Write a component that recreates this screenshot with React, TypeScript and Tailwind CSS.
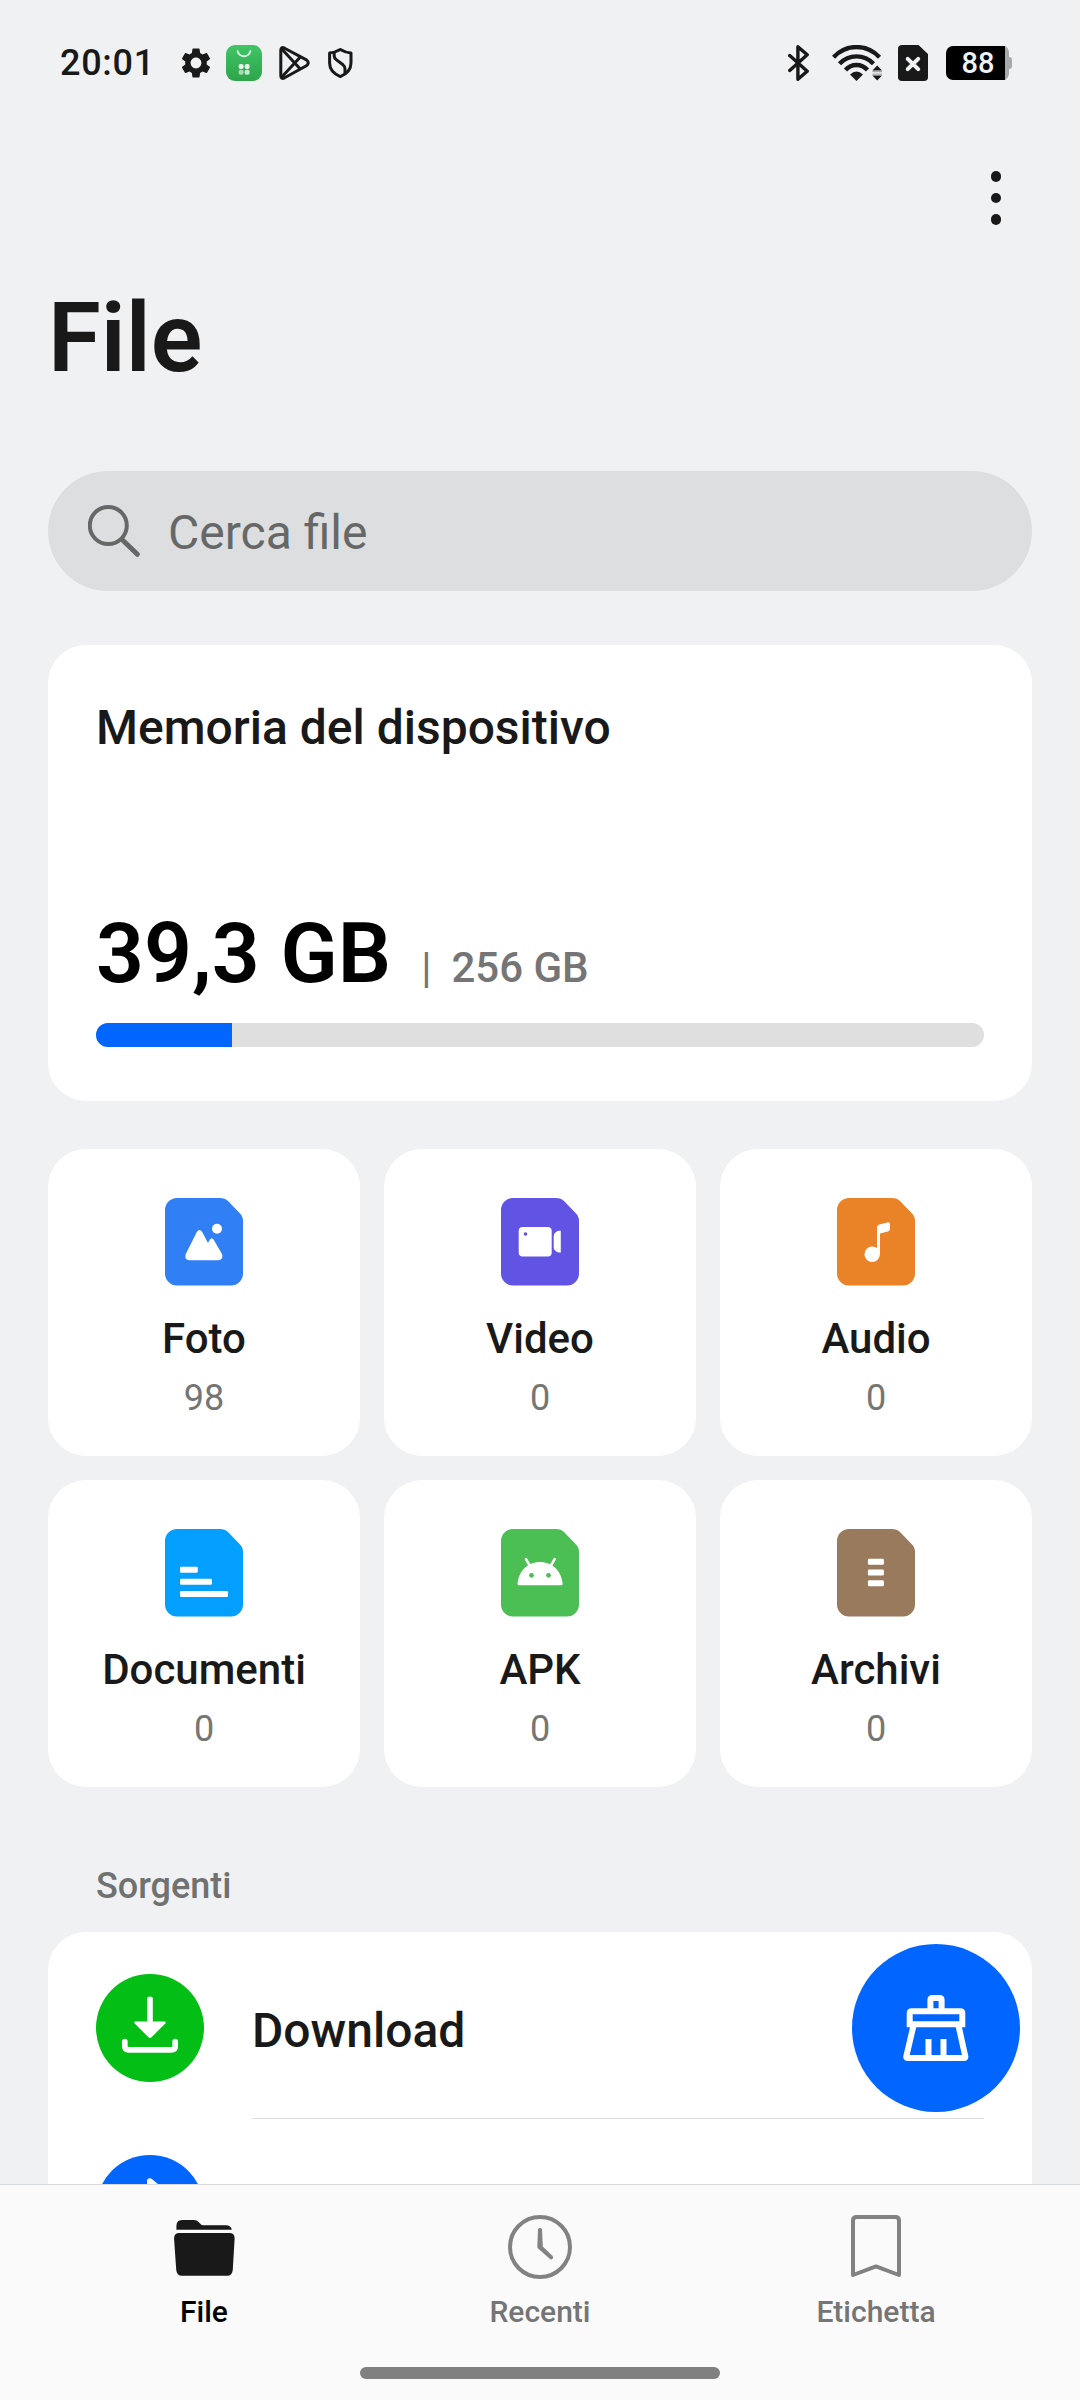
import type { ReactNode } from 'react';
import { MdSettings } from 'react-icons/md';

type Category = {
  label: string;
  count: number;
  color: string;
  glyph: ReactNode;
};

const CATEGORIES: Category[] = [
  {
    label: 'Foto',
    count: 98,
    color: 'text-[#317ff5]',
    glyph: (
      <>
        <circle cx="52" cy="30.7" r="5" />
        <path d="M31.8 34Q34.5 30 37.2 34L43 45L44.7 41.8Q46.8 38.8 48.7 41.8L57 56Q58.8 61.5 53.5 62.2H24Q18.8 61.5 20.8 56Z" />
      </>
    ),
  },
  {
    label: 'Video',
    count: 0,
    color: 'text-[#6153e3]',
    glyph: (
      <>
        <rect x="17.7" y="29" width="33" height="29.4" rx="4" />
        <circle cx="24.5" cy="36" r="1.8" fill="#6153e3" />
        <path d="M59.8 32.7H57.6Q56.3 32.7 54.4 34.6Q52.7 36 52.7 37.6V50Q52.7 51.6 54.6 53Q56.2 54.4 57.6 54.4H59.8Z" />
      </>
    ),
  },
  {
    label: 'Audio',
    count: 0,
    color: 'text-[#ea8327]',
    glyph: (
      <>
        <circle cx="35.2" cy="56.2" r="7.7" />
        <path d="M40 52V29.5Q40 27.2 42.3 26.5L50.5 24.4Q53 24 53 26.5V30.6Q53 33 50.8 33.6L43 35.6V56H40Z" />
      </>
    ),
  },
  {
    label: 'Documenti',
    count: 0,
    color: 'text-[#039fff]',
    glyph: (
      <>
        <rect x="15" y="37.7" width="17.8" height="6" rx="1.2" />
        <rect x="15" y="49.7" width="32" height="6" rx="1.2" />
        <rect x="15" y="62" width="48" height="6" rx="1.2" />
      </>
    ),
  },
  {
    label: 'APK',
    count: 0,
    color: 'text-[#4bbe54]',
    glyph: (
      <>
        <path d="M16.5 54.8C17.5 42 27 33 39 33S60.5 42 61.6 54.8q0 1.5-1.3 1.5H17.8q-1.3 0-1.3-1.5Z" />
        <path d="M25 30.2l4 7M53.6 30.2l-4 7" stroke="#fff" strokeWidth="2.6" strokeLinecap="round" />
        <circle cx="30.5" cy="46.3" r="2.4" fill="#4bbe54" />
        <circle cx="47.5" cy="46.3" r="2.4" fill="#4bbe54" />
      </>
    ),
  },
  {
    label: 'Archivi',
    count: 0,
    color: 'text-[#9a7a5c]',
    glyph: (
      <>
        <rect x="30.9" y="29.7" width="16" height="6" rx="1.2" />
        <rect x="30.9" y="40.4" width="16" height="6" rx="1.2" />
        <rect x="30.9" y="51.3" width="16" height="6" rx="1.2" />
      </>
    ),
  },
];

function StatusBar() {
  return (
    <div className="flex h-[126px] shrink-0 items-center pl-[60px] pr-[68px] text-[#191919]">
      <span className="w-[118px] text-4xl font-medium leading-none tracking-[0.7px]">20:01</span>
      <MdSettings className="h-9 w-9" />

      {/* App market notification */}
      <svg className="ml-3 h-9 w-9" viewBox="0 0 36 36" fill="none">
        <defs>
          <linearGradient id="market" x1="0" y1="0" x2="0" y2="1">
            <stop offset="0" stopColor="#3fc567" />
            <stop offset="1" stopColor="#2da44a" />
          </linearGradient>
        </defs>
        <rect width="36" height="36" rx="9" fill="url(#market)" />
        <path d="M11.7 6.3a6.4 6 0 0 0 12.6 0" stroke="#dff5e5" strokeWidth="1.9" strokeLinecap="round" />
        <rect x="12.6" y="18.9" width="5" height="5" rx="2" fill="#e9f8ec" />
        <rect x="18.6" y="18.9" width="5" height="5" rx="2" fill="#e9f8ec" />
        <rect x="12.6" y="24.7" width="5" height="5" rx="2" fill="#a5dcb1" />
        <rect x="18.6" y="24.7" width="5" height="5" rx="2" fill="#c5e9cd" />
      </svg>

      <svg
        className="ml-[17px] h-[34px] w-[31px]"
        viewBox="0 0 31 34"
        fill="none"
        stroke="currentColor"
        strokeWidth="3"
        strokeLinejoin="round"
      >
        <path d="M1.8 4.2Q1.8 .4 5.6 2.2L27.4 13.9Q31.2 16.8 27.4 19.8L5.6 31.8Q1.8 33.6 1.8 29.8Z" />
        <path d="M2.8 31L21.5 10.8M2.8 3L21.5 23.2" />
      </svg>

      <svg
        className="ml-[18px] h-[30px] w-[25px]"
        viewBox="0 0 25 30"
        fill="none"
        stroke="currentColor"
        strokeWidth="3"
        strokeLinejoin="round"
      >
        <path d="M12.3 1.5Q17.5 4.6 23 5V15Q23 24 12.3 28.6Q1.6 24 1.6 15V5Q7 4.6 12.3 1.5Z" />
        <path d="M6.2 4.5V8Q6.2 10 8.2 11.6L15 16.8Q17 18.5 17 20.7V26" />
      </svg>

      <div className="ml-auto flex items-center">
        <svg
          className="h-9 w-[21px]"
          viewBox="0 0 21 36"
          fill="none"
          stroke="currentColor"
          strokeWidth="3.4"
          strokeLinejoin="round"
          strokeLinecap="round"
        >
          <path d="M1.7 10.6L19.2 26.2L9.9 34.3V1.7L19.2 9.8L1.7 25.4" />
        </svg>

        <svg className="ml-[23px] h-9 w-[51px]" viewBox="0 0 51 36" fill="none">
          <g stroke="currentColor" strokeWidth="4.3">
            <path d="M1.5 12.2Q11 2 24.5 2T47.5 12.2" />
            <path d="M7.5 18.7Q14.5 11.3 24.5 11.3T41.5 18.7" />
            <path d="M13.5 25Q18 20 24.5 20T35.5 25" />
          </g>
          <path d="M18 29.5Q24.5 23.5 31 29.5L24.5 36Z" fill="currentColor" />
          <path d="M45.2 20.5L50 25.5H40.4ZM45.2 35.4L50 30.4H40.4Z" fill="currentColor" />
          <path d="M40.4 26.7H50M40.4 29.2H50" stroke="#9a9b9c" strokeWidth="1" />
        </svg>

        <svg className="ml-[15px] h-9 w-[30px]" viewBox="0 0 30 36">
          <path d="M4 0H20.5L30 9V32a4 4 0 0 1-4 4H4a4 4 0 0 1-4-4V4A4 4 0 0 1 4 0Z" fill="currentColor" />
          <path d="M9.7 13.8L20.2 24.2M20.2 13.8L9.7 24.2" stroke="#f0f1f3" strokeWidth="4" strokeLinecap="round" />
        </svg>

        {/* Battery */}
        <div className="ml-[18px] flex h-[34px] items-center">
          <div className="flex h-[34px] w-[59px] items-center justify-center rounded-l-[7px] bg-black pl-[5px] pt-px text-[29px] font-medium leading-none text-[#f0f1f3]">
            88
          </div>
          <svg className="h-[34px] w-[7px]" viewBox="0 0 7 34" fill="#a9a9a9">
            <path d="M0 0Q4 2 4 7V11Q7 11 7 14V20Q7 23 4 23V27Q4 32 0 34Z" />
          </svg>
        </div>
      </div>
    </div>
  );
}

function StorageCard({ used, total, percent }: { used: string; total: string; percent: number }) {
  return (
    <section className="mt-[54px] h-[456px] rounded-[38px] bg-white px-12 pt-[59px]">
      <h2 className="text-5xl font-medium leading-none">Memoria del dispositivo</h2>
      <div className="mt-40 flex items-baseline leading-none">
        <span className="text-[84px] font-semibold leading-none text-black">{used}</span>
        <span className="ml-[30px] text-[42px] font-normal leading-none text-[#757575]">|</span>
        <span className="ml-5 text-[42px] font-medium leading-none text-[#757575]">{total}</span>
      </div>
      <div className="mt-[27px] h-6 overflow-hidden rounded-full bg-[#dfdfdf]">
        <div className="h-full bg-[#0066ff]" style={{ width: `${percent}%` }} />
      </div>
    </section>
  );
}

function CategoryCard({ label, count, color, glyph }: Category) {
  return (
    <button
      type="button"
      className="flex h-[307px] flex-col items-center rounded-[38px] bg-white pt-[49px]"
    >
      <svg className={`h-[88px] w-[78px] ${color}`} viewBox="0 0 78 88">
        <path
          d="M12 0H55Q60 0 63 3L75 15.5Q78 18.5 78 23V75.5a12 12 0 0 1-12 12H12a12 12 0 0 1-12-12V12A12 12 0 0 1 12 0Z"
          fill="currentColor"
        />
        <g fill="#fff">{glyph}</g>
      </svg>
      <span className="mt-8 text-[42px] font-medium leading-none">{label}</span>
      <span className="mt-5 text-4xl leading-none text-[#757575]">{count}</span>
    </button>
  );
}

function Tab({ label, active, children }: { label: string; active?: boolean; children: ReactNode }) {
  return (
    <button type="button" className="flex w-[336px] flex-col items-center">
      <span className="flex h-16 items-center justify-center text-[#828282]">{children}</span>
      <span
        className={[
          'mt-[18px] text-[30px] font-medium leading-none',
          active ? 'text-black' : 'text-[#757575]',
        ].join(' ')}
      >
        {label}
      </span>
    </button>
  );
}

function BottomNav() {
  return (
    <nav className="flex h-[216px] shrink-0 flex-col items-center border-t border-[#d9dadb] bg-[#fafafa] pt-[30px]">
      <div className="flex">
        <Tab label="File" active>
          <svg className="mt-[2px] h-14 w-[61px]" viewBox="0 0 61 56" fill="#191919">
            <path d="M2.4 9.8V6Q2.4 0 8 0H20Q23 0 24.6 2L27 4.6Q27.6 5.2 29 5.2H52Q57 5.2 57.8 9.8Z" />
            <path d="M5.5 13H55.5Q61 13 60.6 19L58.8 49.5Q58.4 55.8 53 55.8H8Q2.6 55.8 2.2 49.5L.1 19Q-.2 13 5.5 13Z" />
          </svg>
        </Tab>
        <Tab label="Recenti">
          <svg className="h-16 w-16" viewBox="0 0 64 64" fill="none" stroke="currentColor">
            <circle cx="32" cy="32" r="30" strokeWidth="4" />
            <path
              d="M30 14Q32 11.8 34 14L34.8 31.4L44.8 41.2Q45.8 44.4 42.6 44.4L30 33.6Q29.3 32.8 29.3 31.6Z"
              fill="currentColor"
              stroke="none"
            />
          </svg>
        </Tab>
        <Tab label="Etichetta">
          <svg className="h-16 w-[50px]" viewBox="0 0 50 64" fill="none" stroke="currentColor" strokeWidth="4">
            <path d="M2 60V5.5Q2 2 5.5 2H44.5Q48 2 48 5.5V60L25 51.4Z" strokeLinejoin="round" />
          </svg>
        </Tab>
      </div>
      <div className="mt-[40px] h-3 w-[360px] rounded-full bg-[#808080]" />
    </nav>
  );
}

export default function App() {
  return (
    <div className="relative flex h-[2400px] w-[1080px] flex-col overflow-hidden bg-[#f0f1f3] font-['Roboto',sans-serif] text-[#191919]">
      <StatusBar />

      <main className="min-h-0 flex-1 overflow-hidden px-12">
        <div className="flex h-[144px] items-center justify-end pr-[31px]">
          <button type="button" aria-label="Altre opzioni" className="flex flex-col gap-[11px]">
            <span className="h-[10.5px] w-[10.5px] rounded-full bg-[#191919]" />
            <span className="h-[10.5px] w-[10.5px] rounded-full bg-[#191919]" />
            <span className="h-[10.5px] w-[10.5px] rounded-full bg-[#191919]" />
          </button>
        </div>

        <h1 className="mt-5 text-8xl font-semibold leading-none">File</h1>

        {/* Search */}
        <div className="mt-[85px] flex h-[120px] items-center rounded-full bg-[#dddee0] pl-10 text-[#666868]">
          <svg className="h-[52px] w-[52px]" viewBox="0 0 52 52" fill="none" stroke="currentColor" strokeLinecap="round">
            <circle cx="20.3" cy="20.5" r="18.5" strokeWidth="4" />
            <path d="M34 34.5L49.3 49.3" strokeWidth="5" />
          </svg>
          <span className="ml-7 pt-[3px] text-5xl leading-none">Cerca file</span>
        </div>

        <StorageCard used="39,3 GB" total="256 GB" percent={15.35} />

        <div className="mt-12 grid grid-cols-3 gap-6">
          {CATEGORIES.map((category) => (
            <CategoryCard key={category.label} {...category} />
          ))}
        </div>

        <h3 className="mt-[81px] pl-12 text-4xl font-medium leading-none text-[#707272]">Sorgenti</h3>

        <section className="mt-7 rounded-t-[38px] bg-white px-12">
          <div className="flex h-[186px] pt-[42px]">
            <svg className="h-[108px] w-[108px]" viewBox="0 0 108 108">
              <circle cx="54" cy="54" r="54" fill="#02be15" />
              <path
                d="M51.2 24Q51.2 22.4 54 22.4T56.8 24V47.6H68.5Q70.5 48 69.3 49.6L55.5 63.3Q54 64.6 52.5 63.3L38.7 49.6Q37.5 48 39.5 47.6H51.2Z"
                fill="#fff"
              />
              <path
                d="M28.8 67.6V72Q28.8 75.8 32.6 75.8H75.4Q79.2 75.8 79.2 72V67.6"
                fill="none"
                stroke="#fff"
                strokeWidth="5.7"
                strokeLinecap="round"
              />
            </svg>
            <span className="ml-12 mt-[33px] text-5xl font-medium leading-none">Download</span>
          </div>
          <div className="ml-[156px] h-px bg-[#dcdddf]" />
          <div className="flex h-[186px] pt-9">
            <svg className="h-[108px] w-[108px]" viewBox="0 0 108 108">
              <circle cx="54" cy="54" r="54" fill="#0066ff" />
              <path
                d="M35.5 40L71.5 67L53.8 82V26L71.5 40.5L35.5 68"
                fill="none"
                stroke="#fff"
                strokeWidth="5.6"
                strokeLinejoin="round"
                strokeLinecap="round"
              />
            </svg>
          </div>
        </section>
      </main>

      {/* Cleanup button, floats over the list */}
      <button
        type="button"
        aria-label="Pulizia"
        className="absolute right-[60px] top-[1944px] h-[168px] w-[168px] rounded-full bg-[#0066ff]"
      >
        <svg className="h-full w-full" viewBox="0 0 168 168" fill="none" stroke="#fff" strokeWidth="6">
          <path d="M78.4 67V56Q78.4 54 80.4 54H87.6Q89.6 54 89.6 56V67" />
          <path d="M57.7 83.3V69.3Q57.7 67.3 59.7 67.3H108.3Q110.3 67.3 110.3 69.3V83.3M57.7 80.3H110.3" />
          <path d="M61.4 82L54.3 112.4Q54 114 55.6 114H112Q113.6 114 113.3 112.4L106.6 82" />
          <path d="M76.5 95V114M91.5 95V114" />
        </svg>
      </button>

      <BottomNav />
    </div>
  );
}
